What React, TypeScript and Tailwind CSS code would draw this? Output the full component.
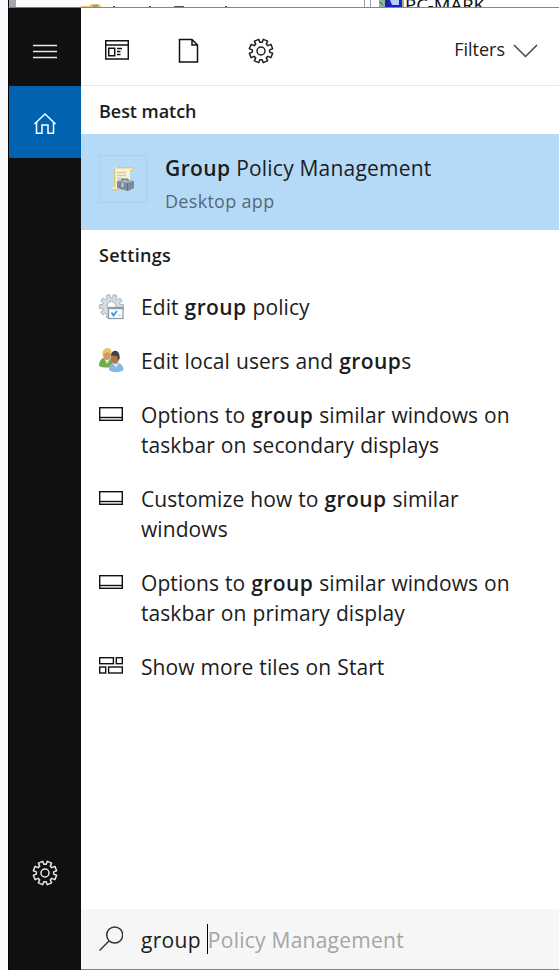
import type { ReactNode } from "react";

function gearPath(teeth: number, outer: number, inner: number, c: number) {
  const step = (Math.PI * 2) / teeth;
  const pts: string[] = [];
  for (let i = 0; i < teeth; i++) {
    const mid = (i + 0.5) * step - Math.PI / 2;
    const at = (r: number, a: number) =>
      `${(c + r * Math.cos(a)).toFixed(2)} ${(c + r * Math.sin(a)).toFixed(2)}`;
    pts.push(at(inner, mid - step * 0.34), at(outer, mid - step * 0.25), at(outer, mid + step * 0.25), at(inner, mid + step * 0.34));
  }
  return `M${pts.join("L")}Z`;
}

function Gear({ className }: { className: string }) {
  return (
    <svg className={className} width="26" height="26" viewBox="0 0 26 26" fill="none" stroke="currentColor" strokeWidth="1.5" strokeLinejoin="round">
      <path d={gearPath(8, 11.9, 8.7, 13)} />
      <circle cx="13" cy="13" r="4" />
    </svg>
  );
}

function TaskbarIcon() {
  return (
    <svg className="mb-0.5 block" width="24" height="14" viewBox="0 0 24 14" fill="none" stroke="#111" strokeWidth="1.4">
      <rect x=".7" y=".7" width="22.6" height="12.6" />
      <path d="M0 10.5H24" />
    </svg>
  );
}

function TilesIcon() {
  return (
    <svg className="mb-1 block" width="24" height="17" viewBox="0 0 24 17" fill="none" stroke="#111" strokeWidth="1.4">
      <rect x=".7" y=".7" width="13.7" height="6" />
      <rect x="17.3" y=".7" width="6" height="6" />
      <rect x=".7" y="10" width="6" height="6" />
      <rect x="9.6" y="10" width="13.7" height="6" />
    </svg>
  );
}

function PolicyGear() {
  return (
    <svg className="block" width="26" height="26" viewBox="0 0 26 26">
      <path d={gearPath(10, 12, 8.8, 12.5)} fill="#d3dde3" stroke="#9fadb6" strokeWidth=".9" />
      <circle cx="12.5" cy="12" r="4.5" fill="#fff" stroke="#9fadb6" />
      <rect x="9.500" y="13.5" width="14.500" height="11" fill="#fff" stroke="#8f9ba2" strokeWidth="1.3" />
      <path d="M9 14.300H24.500" stroke="#8f9ba2" strokeWidth="1.8" />
      <path d="M12.500 18.500l2 3 3.400-4.600" fill="none" stroke="#2c8fe8" strokeWidth="1.7" />
      <path d="M19 21.500H22" stroke="#9ecbf0" />
    </svg>
  );
}

function UsersIcon() {
  return (
    <svg className="block" width="26" height="26" viewBox="0 0 26 26">
      <path d="M0 18C0 12 3 9.500 7.500 9.500S14 13 14 18c-4 2-10 2-14 0z" fill="#76a94c" />
      <path d="M5.500 11l2.500 5 3-5z" fill="#e5efda" />
      <ellipse cx="8" cy="6.500" rx="4" ry="5.500" fill="#d39a62" />
      <path d="M3.500 7C3 3 5.500 0 8.500 0S13 2.500 12.500 6l-4-2z" fill="#e2c768" />
      <path d="M10 22c0-5 3-7.500 7-7.500s7.500 2.500 7.500 7.500c-4 3-10.500 3-14.500 0z" fill="#85b7e8" />
      <path d="M13.500 15.500l3.500 4 3-4z" fill="#d7e9fa" />
      <ellipse cx="16" cy="10" rx="4.300" ry="5.500" fill="#ad754b" />
      <path d="M12 7.500c0-3 2-4.700 4.500-4.700S21.200 6 20.500 11l-1.500 1-1-4z" fill="#3f4547" />
    </svg>
  );
}

function Scroll() {
  return (
    <svg width="24" height="24" viewBox="0 0 24 24">
      <path d="M4 0H21c2 0 2 3 0 3h-2v20H2c-2 0-1-3 2-3z" fill="#fbf4d0" />
      <path d="M5 .7H21c2 .5 1.500 3 0 3h-2M0 22.500H14M3.700 1.500V20" fill="none" stroke="#dccb7c" strokeWidth="1.500" />
      <path d="M6 5.500h9M6 8.500h9M6 11.500h6" stroke="#ccc7bb" strokeWidth="1.500" />
      <path d="M6 14l7-2 10 2v7l-6 3-11-3z" fill="#788d99" />
      <path d="M6 14l10 2 7-2-9-2z" fill="#a9b8c0" />
      <path d="M16.500 16v8M11 14v-2h6v2" fill="none" stroke="#5d707c" />
      <path d="M11.500 16v4" stroke="#d8e2e7" strokeWidth="1.500" />
    </svg>
  );
}

function Row({ icon, children }: { icon: ReactNode; children: ReactNode }) {
  return (
    <div className="mb-6 flex">
      <div className="flex h-[30px] w-[42px] shrink-0 items-center">{icon}</div>
      <div className="whitespace-nowrap text-[21px] leading-[30px] tracking-[0.07px] [word-spacing:0.5px]">{children}</div>
    </div>
  );
}

const B = ({ children }: { children: ReactNode }) => <span className="font-semibold tracking-[0.4px]">{children}</span>;

export default function App() {
  return (
    <div className="flex h-[970px] w-[559px] flex-col overflow-hidden bg-white font-['Open_Sans','Noto_Sans',sans-serif] text-[#1c1c1c]">
      <div className="flex h-[7px] shrink-0 overflow-hidden bg-white">
        <div className="w-2 bg-[#f8f9fd]" />
        <div className="w-2 border-l border-black bg-[#a8a8ac]" />
        <svg width="543" height="8" viewBox="0 0 543 8">
          <path d="M65 8V6h8l2-2h8l2 2v2" fill="#efc363" />
          <path d="M77 6h5" stroke="#63a5cf" strokeWidth="2" />
          <path d="M97 6.500h2M133 6.500h2M158 6.500h10M209 6.500h2" stroke="#556" strokeWidth="1" />
          <path d="M348.500 0v8M354.500 0v8" stroke="#999bb0" />
          <path d="M363 0h6v8h-6z" fill="#92b694" />
          <path d="M364 2l3 3" stroke="#345b32" />
          <path d="M369 0h17v8h-17z" fill="#1725b5" />
          <path d="M374 0h9v5h-7z" fill="#b9ceff" />
          <path d="M386 0h2v8h-2z" fill="#aaa" />
          <text x="389" y="11" fontSize="17" textLength="80" lengthAdjust="spacingAndGlyphs" fill="#111" fontFamily="Noto Sans">PC-MARK</text>
        </svg>
      </div>
      <div className="flex h-[963px]">
        <div className="w-2 bg-[#f8f9fd]" />
        <aside className="flex w-[73px] shrink-0 flex-col border-l border-t border-black border-t-[#777] bg-[#101010] text-[#e8e8e8]">
          <div className="flex h-[78px] items-center justify-center pt-2.5">
            <svg width="24" height="16" viewBox="0 0 24 16" stroke="currentColor" strokeWidth="1.400">
              <path d="M0 1.500H24M0 7.500H24M0 13.500H24" />
            </svg>
          </div>
          <div className="flex h-[72px] items-center justify-center bg-[#0063b1] pt-1 text-white">
            <svg width="24" height="24" viewBox="0 0 24 24" fill="none" stroke="currentColor" strokeWidth="1.500">
              <path d="M1.500 12L12 2l10.500 10M3.500 10.500V21.300H9V13h6v8.300h5.500V10.500" />
            </svg>
          </div>
          <div className="mb-[61px] mt-auto flex h-[72px] items-center justify-center">
            <Gear className="text-[#e8e8e8]" />
          </div>
        </aside>
        <main className="flex min-w-0 flex-1 flex-col border-y border-[#858585]">
          <header className="flex h-[78px] shrink-0 items-center border-b border-[#e8e8e8] pl-6 pr-[21px] text-[#202020]">
            <svg className="mt-1.5" width="24" height="20" viewBox="0 0 24 20" fill="none" stroke="#111" strokeWidth="1.500">
              <path d="M.7.7h22.600v18.400H.7zM.7 5h22.600M3.700 8.200h6v7.500h-6zM12 8.500h5M12 11.500h3.500M12 14.500h3.500" />
            </svg>
            <svg className="ml-[49px] mt-2" width="21" height="26" viewBox="0 0 21 26" fill="none" stroke="#111" strokeWidth="1.500">
              <path d="M1.500 1.500h12.500l5.500 5.500v17H1.500zM14 1.500v5.500h5.500" />
            </svg>
            <Gear className="ml-[49px] mt-2" />
            <span className="ml-auto mt-1.5 text-[18px]">Filters</span>
            <svg className="ml-2 mt-2" width="25" height="14" viewBox="0 0 25 14" fill="none" stroke="#444" strokeWidth="1.500">
              <path d="M1 1l11.500 11.500L24 1" />
            </svg>
          </header>
          <h2 className="h-12 shrink-0 pl-[18px] text-[18px] font-semibold leading-[51px] tracking-[-0.05px]">Best match</h2>
          <section className="flex h-24 shrink-0 bg-[#b5daf7] pl-[18px] pt-[21px]">
            <div className="flex h-12 w-12 items-center justify-center border border-[#adcfe9]"><Scroll /></div>
            <div className="-mt-[3px] ml-[18px] flex flex-col whitespace-nowrap">
              <span className="text-[21px] leading-[32px] tracking-[0.2px]"><B>Group</B> Policy Management</span>
              <span className="text-[18px] leading-[34px] tracking-[0.3px] text-[#566978]">Desktop app</span>
            </div>
          </section>
          <h2 className="h-[62px] shrink-0 pl-[18px] text-[18px] font-semibold leading-[51px] tracking-[0.3px]">Settings</h2>
          <section className="flex-1 pl-[18px]">
            <Row icon={<PolicyGear />}>Edit <B>group</B> policy</Row>
            <Row icon={<UsersIcon />}>Edit local users and <B>group</B>s</Row>
            <Row icon={<TaskbarIcon />}>Options to <B>group</B> similar windows on<br />taskbar on secondary displays</Row>
            <Row icon={<TaskbarIcon />}>Customize how to <B>group</B> similar<br />windows</Row>
            <Row icon={<TaskbarIcon />}>Options to <B>group</B> similar windows on<br />taskbar on primary display</Row>
            <Row icon={<TilesIcon />}>Show more tiles on Start</Row>
          </section>
          <footer className="flex h-[60px] shrink-0 items-center bg-[#f6f6f6] pl-[18px] text-[21px]">
            <svg width="24" height="26" viewBox="0 0 24 26" fill="none" stroke="#333" strokeWidth="1.500">
              <circle cx="15.700" cy="9" r="8" /><path d="M10 15L.5 24.500" />
            </svg>
            <span className="ml-[18px] mt-1 tracking-[0.3px]">group</span>
            <span className="ml-[6px] h-[30px] w-px bg-black" />
            <span className="mt-1 whitespace-nowrap tracking-[0.25px] text-[#a5a5a5]">Policy Management</span>
          </footer>
        </main>
      </div>
    </div>
  );
}
